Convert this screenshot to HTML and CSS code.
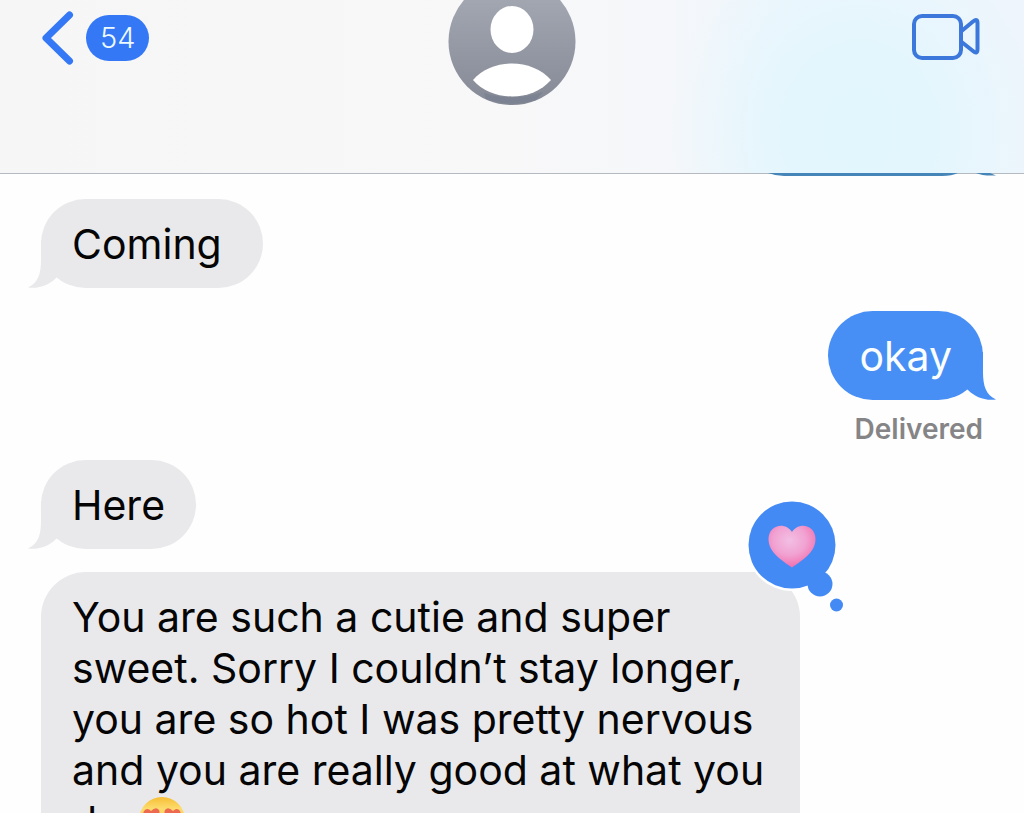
FILE: index.html
```html
<!DOCTYPE html>
<html lang="en">
<head>
<meta charset="utf-8">
<meta name="viewport" content="width=device-width, initial-scale=1">
<title>Messages</title>
<link rel="stylesheet" href="styles.css">
</head>
<body>
<div class="app">
  <header class="bar">
    <button class="back" type="button" aria-label="Back, 54 unread">
      <svg width="32" height="54" viewBox="0 0 32 54" aria-hidden="true"><path d="M27.500 4 4 27l23.500 23" fill="none" stroke="#3478f6" stroke-width="7" stroke-linecap="round" stroke-linejoin="round"/></svg>
      <span class="count">54</span>
    </button>
    <button class="avatar" type="button" aria-label="Contact details">
      <svg width="128" height="106" viewBox="0 0 128 106" aria-hidden="true">
        <defs>
          <linearGradient id="face" gradientUnits="userSpaceOnUse" x1="0" y1="0" x2="0" y2="106"><stop offset="0" stop-color="#a2a6b1"/><stop offset="1" stop-color="#858995"/></linearGradient>
        </defs>
        <circle cx="64" cy="41.500" r="63.500" fill="url(#face)"/>
        <path d="M36 93Q64 102 95 92L88 100Q64 108 38 99Z" fill="#747d90" opacity=".6"/>
        <ellipse cx="64" cy="29.500" rx="21.500" ry="23.500" fill="#fff"/>
        <path d="M25 80C44 58 84 58 103 80C84 102 44 102 25 80Z" fill="#fff"/>
      </svg>
    </button>
    <button class="video" type="button" aria-label="Video call">
      <svg width="68" height="46" viewBox="0 0 68 46" fill="none" stroke="#3c78dc" stroke-width="4" stroke-linejoin="round" aria-hidden="true"><rect x="2" y="2" width="47" height="42" rx="8"/><path d="M49 17.500 61 7.500Q65.500 4 65.500 9V35Q65.500 41 61 37L49 27.500"/></svg>
    </button>
    <svg class="peek" width="228" height="4" viewBox="0 0 228 4" aria-hidden="true"><path d="M0 1H190Q184 4 174 4H16Q8 4 0 1ZM208 1Q214 4 228 3.500L222 1Z" fill="#4685b8"/></svg>
  </header>

  <main class="thread">
    <div class="bubble received roomy">Coming
      <svg class="tail" width="38" height="48" viewBox="0 0 38 48" aria-hidden="true"><path d="M13 0V20C13 34 10 43 0 47.500C11 49 21 45 28 38L38 30V0Z"/></svg>
    </div>
    <div class="bubble sent">okay
      <svg class="tail" width="38" height="48" viewBox="0 0 38 48" aria-hidden="true"><path d="M13 0V20C13 34 10 43 0 47.500C11 49 21 45 28 38L38 30V0Z"/></svg>
    </div>
    <p class="status">Delivered</p>
    <div class="bubble received">Here
      <svg class="tail" width="38" height="48" viewBox="0 0 38 48" aria-hidden="true"><path d="M13 0V20C13 34 10 43 0 47.500C11 49 21 45 28 38L38 30V0Z"/></svg>
    </div>
    <div class="bubble received long">You are such a cutie and super sweet. Sorry I couldn’t stay longer, you are so hot I was pretty nervous and you are really good at what you do.
      <svg class="emoji" width="48" height="48" viewBox="0 0 48 48" role="img" aria-label="Smiling face with heart eyes">
        <defs><linearGradient id="skin" x1="0" y1="0" x2="0" y2="1"><stop offset="0" stop-color="#f6bd35"/><stop offset=".25" stop-color="#fddc6c"/><stop offset="1" stop-color="#f5ad31"/></linearGradient></defs>
        <circle cx="24" cy="24" r="23" fill="url(#skin)"/>
        <path d="M14 27C7 22 4 19 6 15Q9 11 13 15Q18 10 21 14C23 19 19 23 14 27Z" fill="#ed6a50"/>
        <path d="M34 27C41 22 44 19 42 15Q39 11 35 15Q30 10 27 14C25 19 29 23 34 27Z" fill="#ed6a50"/>
        <path d="M12 30Q24 35 36 30Q33 42 24 42T12 30Z" fill="#703c22"/>
      </svg>
      <svg class="reaction" width="100" height="114" viewBox="0 0 100 114" role="img" aria-label="Loved">
        <defs>
          <radialGradient id="heart" cx=".45" cy=".35" r=".7"><stop offset="0" stop-color="#f2bfe3"/><stop offset=".5" stop-color="#f1a2d2"/><stop offset="1" stop-color="#f466a9"/></radialGradient>
        </defs>
        <g fill="#fff"><circle cx="46" cy="46" r="46"/><circle cx="74" cy="85" r="15"/></g>
        <g fill="#448af4"><circle cx="46" cy="46" r="43.500"/><circle cx="74" cy="85" r="12.500"/><circle cx="90.500" cy="106" r="6.500"/></g>
        <path d="M46 68.500C37 62 22.500 54 22.500 40C22.500 26 39 22 46 33C53 22 69.500 26 69.500 40C69.500 54 55 62 46 68.500Z" fill="url(#heart)"/>
      </svg>
    </div>
  </main>
</div>
</body>
</html>
```
FILE: styles.css
```css
* {
  box-sizing: border-box;
}

body {
  margin: 0;
  background: #fefefe;
  color: #050505;
  font-family: Inter, "Liberation Sans", sans-serif;
}

button {
  border: 0;
  padding: 0;
  background: none;
  font: inherit;
  cursor: pointer;
}

svg {
  display: block;
}

.app {
  display: flex;
  flex-direction: column;
  height: 100vh;
  overflow: hidden;
}

.bar {
  position: relative;
  flex: none;
  display: grid;
  grid-template-columns: 1fr auto 1fr;
  align-items: start;
  min-height: 174px;
  padding: 0 44px;
  border-bottom: 1px solid #b4babf;
  background:
    radial-gradient(ellipse 190px 210px at 84% 75%, #e1f6fd 0%, #e4f6fd 40%, rgba(235, 246, 253, 0) 100%),
    linear-gradient(90deg, #f6f6f6 0%, #f8f8f9 50%, #f5f7fa 65%, #eff6fc 75%, #eff5fc 100%);
}

.back {
  display: flex;
  align-items: center;
  justify-self: start;
  gap: 12px;
  margin-left: -2px;
  padding-top: 11px;
}

.count {
  padding: 0 14px;
  border-radius: 24px;
  background: #3478f6;
  color: #edfaff;
  font-size: 29px;
  font-weight: 300;
  line-height: 46px;
}

.video {
  justify-self: end;
  padding-top: 14px;
}

.peek {
  position: absolute;
  right: 28px;
  bottom: -3px;
}

.thread {
  flex: 1;
  display: flex;
  flex-direction: column;
  align-items: flex-start;
  gap: 23px;
  min-height: 0;
  padding: 25px 41px 0;
}

.bubble {
  position: relative;
  flex: none;
  max-width: 759px;
  padding: 20px 31px 18px;
  border-radius: 45px;
  background: #e9e9eb;
  font-size: 41px;
  line-height: 51px;
}

.roomy {
  padding-right: 41px;
}

.sent {
  align-self: flex-end;
  background: #488ff5;
  color: #fafeff;
}

.tail {
  position: absolute;
  left: -13px;
  bottom: 0;
  fill: #e9e9eb;
}

.sent .tail {
  right: -13px;
  left: auto;
  fill: #488ff5;
  transform: scaleX(-1);
}

.status {
  align-self: flex-end;
  margin: -8px 0 -7px;
  color: #858587;
  font-size: 28px;
  font-weight: 600;
  line-height: 29px;
}

.emoji {
  display: inline-block;
  margin-left: -7px;
  vertical-align: -8px;
}

.reaction {
  position: absolute;
  top: -73px;
  right: -46px;
}
```
